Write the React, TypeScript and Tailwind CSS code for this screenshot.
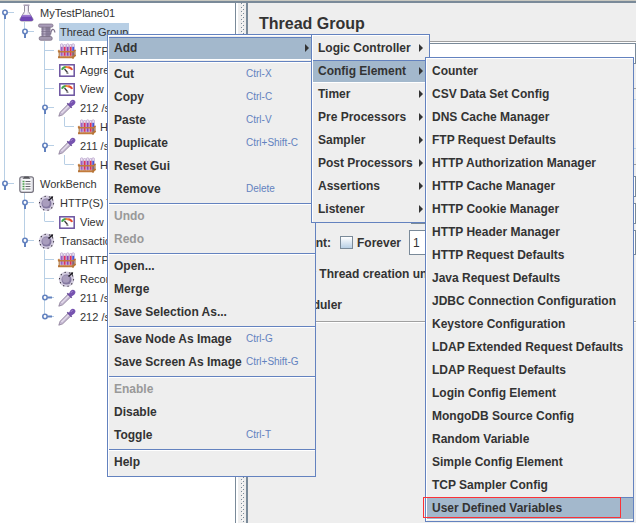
import type { ReactNode } from "react";

type IconName = "flask" | "spool" | "rack" | "gauge" | "dropper" | "clipboard" | "dial";
type Guide = "blank" | "line" | "tee" | "corner" | "open" | "openLast" | "closed" | "closedLast";

interface TreeNode {
  label: string;
  icon: IconName;
  guides: Guide[];
  selected?: boolean;
}

const tree: TreeNode[] = [
  { label: "MyTestPlane01", icon: "flask", guides: ["open"] },
  { label: "Thread Group", icon: "spool", guides: ["line", "openLast"], selected: true },
  { label: "HTTP", icon: "rack", guides: ["line", "blank", "tee"] },
  { label: "Aggre", icon: "gauge", guides: ["line", "blank", "tee"] },
  { label: "View", icon: "gauge", guides: ["line", "blank", "tee"] },
  { label: "212 /s", icon: "dropper", guides: ["line", "blank", "open"] },
  { label: "H", icon: "rack", guides: ["line", "blank", "line", "corner"] },
  { label: "211 /s", icon: "dropper", guides: ["line", "blank", "openLast"] },
  { label: "H", icon: "rack", guides: ["line", "blank", "blank", "corner"] },
  { label: "WorkBench", icon: "clipboard", guides: ["openLast"] },
  { label: "HTTP(S) T", icon: "dial", guides: ["blank", "open"] },
  { label: "View", icon: "gauge", guides: ["blank", "line", "corner"] },
  { label: "Transactio", icon: "dial", guides: ["blank", "openLast"] },
  { label: "HTTP", icon: "rack", guides: ["blank", "blank", "tee"] },
  { label: "Recor", icon: "dial", guides: ["blank", "blank", "tee"] },
  { label: "211 /s", icon: "dropper", guides: ["blank", "blank", "closed"] },
  { label: "212 /s", icon: "dropper", guides: ["blank", "blank", "closedLast"] },
];

function Icon({ name }: { name: IconName }) {
  return (
    <svg viewBox="0 0 18 18" className="-ml-0.5 h-[18px] w-[18px] shrink-0 overflow-visible" aria-hidden="true">
      {name === "flask" && (
        <>
          <path d="M6.500 1.500h4v6L15 15q.5 2-1.600 2H3.600q-2.100 0-1.600-2l4.500-7.500z" fill="#e6e0ee" stroke="#8a8496" strokeWidth=".9" />
          <path d="M4.300 11h8.400l2.200 4.200q.3 1.800-1.500 1.800H3.600q-1.800 0-1.500-1.800z" fill="#6f45b5" />
          <path d="M4.300 11h8.400l.9 1.700H3.400z" fill="#9b78d1" />
          <path d="M8 2v8" stroke="#fff" strokeWidth="1.300" />
          <path d="M5.500 1.200h6" stroke="#aaa1b7" strokeWidth="1.500" />
        </>
      )}
      {name === "spool" && (
        <>
          <path d="M3.500 3.500h9v11h-9z" fill="#8d819d" />
          <path d="M5.500 4h2v10h-2z" fill="#b5abc2" />
          <path d="M3.500 6h9M3.500 8.500h9M3.500 11h9" stroke="#7d718c" strokeWidth=".7" />
          <rect x=".5" y="1" width="14.500" height="3.200" rx="1.500" fill="#a99cb9" stroke="#74697e" strokeWidth=".7" />
          <rect x="1.200" y="13.500" width="13" height="3.800" rx="1.500" fill="#a398b0" stroke="#74697e" strokeWidth=".7" />
          <path d="M12.500 11.500c.5-4 1.500-5.500 3-5 1.300.5.700 2.500 1.800 2.500" fill="none" stroke="#82768f" strokeWidth="1.300" />
        </>
      )}
      {name === "rack" && (
        <>
          {[2.500, 5.500, 8.500, 11.500, 14].map((x, i) => (
            <g key={x}>
              <rect x={x} y={i % 2 ? 2.500 : 1.800} width="2.400" height="12.500" rx="1" fill="#efe6f5" stroke="#9b7fb5" strokeWidth=".5" />
              <rect x={x + 0.300} y="4.800" width="1.800" height="9" fill={["#9b5fc0", "#e0305c", "#8b46b4", "#e8304b", "#4856d8"][i]} />
            </g>
          ))}
          <path d="M0 9.500L1.500 8M0 9.800h15.500l2-2" fill="none" stroke="#c27b3b" strokeWidth="1.400" />
          <path d="M0 15.300h15l2.500-2.300" fill="none" stroke="#c27b3b" strokeWidth="2" />
          <path d="M1.200 9v7M17 8v6M15 10v7" stroke="#ad7036" strokeWidth="1.100" />
        </>
      )}
      {name === "gauge" && (
        <>
          <rect x="1.800" y="3.800" width="14.400" height="11.400" fill="#fff" stroke="#6b529f" strokeWidth="1.500" />
          <path d="M4 8.800q.8-2.800 4-2.800" fill="none" stroke="#3fa548" strokeWidth="2" />
          <path d="M7.500 6q2-.2 3.500.5" fill="none" stroke="#f08a3a" strokeWidth="2" />
          <path d="M10.500 6.300Q13.500 7 14 9" fill="none" stroke="#e64b2f" strokeWidth="2" />
          <path d="M6.500 8l3 3.500" stroke="#363636" strokeWidth="1.200" />
          <path d="M8.500 12.200h2" stroke="#555" />
        </>
      )}
      {name === "dropper" && (
        <>
          <path d="M.8 17.200l1.400-4L10.300 5l2.700 2.700L4.700 15.800z" fill="#c9bdd6" stroke="#867793" strokeWidth=".8" />
          <path d="M3.500 14L11 6.500" stroke="#f6f1fa" />
          <path d="M9.300 4.300l4.400 4.400" stroke="#624595" strokeWidth="1.500" />
          <path d="M10.500 5.500l2-3.500q2.200-2.200 4.200-.5 1.700 2-.5 4.200L12.800 8z" fill="#7753b0" />
          <path d="M12.700 4l2-2" stroke="#a58bd0" />
        </>
      )}
      {name === "clipboard" && (
        <>
          <rect x="1.800" y="1.800" width="13.600" height="15.500" rx="2" fill="#e9e9ee" stroke="#77747f" strokeWidth="1.200" />
          <path d="M4 4h9v12H4z" fill="#f8f8fa" />
          <path d="M4.500 3.800l2-2.300h4l2 2.300z" fill="#55555a" />
          <path d="M7.500 6.500h5M7.500 9h5M7.500 11.500h5M7.500 14h5" stroke="#66666d" strokeWidth="1.100" />
          <path d="M4.500 6.500h2M4.500 9h2M4.500 11.500h2M4.500 14h2" stroke="#489c49" strokeWidth="1.300" />
        </>
      )}
      {name === "dial" && (
        <>
          <circle cx="8.500" cy="9.300" r="7.700" fill="#d3ccdf" />
          <circle cx="8.500" cy="9.300" r="7" fill="none" stroke="#29242f" strokeWidth="1.100" strokeDasharray="1.100 3.300" />
          <circle cx="8.500" cy="9.600" r="5" fill="#8478a0" />
          <circle cx="8" cy="9" r="3.700" fill="#a99dbd" />
          <path d="M10.500 6.500l4-3.500" stroke="#1f1c24" strokeWidth="1.500" />
          <path d="M12 2.800l3.200-.5-.7 3z" fill="#1f1c24" />
        </>
      )}
    </svg>
  );
}

function GuideCell({ kind, root }: { kind: Guide; root: boolean }) {
  const open = kind === "open" || kind === "openLast";
  const closed = kind === "closed" || kind === "closedLast";
  const through = kind === "line" || kind === "tee" || kind === "open" || kind === "closed";
  const top = root && kind === "open" ? 9 : 0;
  return (
    <svg viewBox="0 0 20 19" className="h-[19px] w-5 shrink-0" aria-hidden="true">
      {kind !== "blank" && <path d={`M4.500 ${top}V${through ? 19 : 9}`} stroke="#b8cfe5" />}
      {kind !== "blank" && kind !== "line" && <path d="M4.500 9.500H14" stroke="#b8cfe5" />}
      {open && <path d="M5 12v4" stroke="#6382bf" strokeWidth="2" />}
      {closed && <path d="M8 9.500h4" stroke="#6382bf" strokeWidth="2" />}
      {(open || closed) && <circle cx="5" cy="9.500" r="2.200" fill="#fff" stroke="#6382bf" strokeWidth="1.600" />}
    </svg>
  );
}

function TreeRow({ node }: { node: TreeNode }) {
  return (
    <li role="treeitem" aria-selected={!!node.selected} className="flex h-[19px] items-center">
      {node.guides.map((kind, i) => (
        <GuideCell key={i} kind={kind} root={i === 0} />
      ))}
      <Icon name={node.icon} />
      <span
        className={`ml-[3px] px-px text-[11px] leading-[18px] whitespace-nowrap ${node.selected ? "bg-[#b8cfe5]" : ""}`}
      >
        {node.label}
      </span>
    </li>
  );
}

interface Item {
  label: string;
  keys?: string;
  arrow?: boolean;
  active?: boolean;
  disabled?: boolean;
  marked?: boolean;
}

function MenuRow({ item }: { item: Item }) {
  return (
    <button
      type="button"
      role="menuitem"
      disabled={item.disabled}
      className={`relative flex h-[23px] w-full items-center border-y pr-[6px] pb-[2px] pl-[5px] text-left font-bold whitespace-nowrap ${
        item.active ? "border-t-[#6382bf] border-b-white bg-[#a3b8cc]" : "border-transparent"
      } ${item.disabled ? "text-[#999999]" : "text-[#333333]"}`}
    >
      <span className="flex-1">{item.label}</span>
      {item.keys && <span className="w-[63px] text-[10px] font-normal text-[#6382bf]">{item.keys}</span>}
      {item.arrow && (
        <svg viewBox="0 0 4 8" className="h-2 w-1 shrink-0" aria-hidden="true">
          <path d="M0 0l4 4-4 4z" fill="#333" />
        </svg>
      )}
      {item.marked && (
        <span className="absolute -top-px -left-1 h-[21px] w-[198px] border border-solid border-[#fa3237]" />
      )}
    </button>
  );
}

function Menu({ label, place, children }: { label: string; place: string; children: ReactNode }) {
  return (
    <div role="menu" aria-label={label} className={`absolute border border-[#6382bf] bg-[#eeeeee] ${place}`}>
      <div className="border-t border-l border-white pt-px pb-px">{children}</div>
    </div>
  );
}

const groups: Item[][] = [
  [
    { label: "Cut", keys: "Ctrl-X" },
    { label: "Copy", keys: "Ctrl-C" },
    { label: "Paste", keys: "Ctrl-V" },
    { label: "Duplicate", keys: "Ctrl+Shift-C" },
    { label: "Reset Gui" },
    { label: "Remove", keys: "Delete" },
  ],
  [
    { label: "Undo", disabled: true },
    { label: "Redo", disabled: true },
  ],
  [{ label: "Open..." }, { label: "Merge" }, { label: "Save Selection As..." }],
  [
    { label: "Save Node As Image", keys: "Ctrl-G" },
    { label: "Save Screen As Image", keys: "Ctrl+Shift-G" },
  ],
  [{ label: "Enable", disabled: true }, { label: "Disable" }, { label: "Toggle", keys: "Ctrl-T" }],
  [{ label: "Help" }],
];

const addItems: Item[] = [
  { label: "Logic Controller", arrow: true },
  { label: "Config Element", arrow: true, active: true },
  { label: "Timer", arrow: true },
  { label: "Pre Processors", arrow: true },
  { label: "Sampler", arrow: true },
  { label: "Post Processors", arrow: true },
  { label: "Assertions", arrow: true },
  { label: "Listener", arrow: true },
];

const configItems: Item[] = [
  { label: "Counter" },
  { label: "CSV Data Set Config" },
  { label: "DNS Cache Manager" },
  { label: "FTP Request Defaults" },
  { label: "HTTP Authorization Manager" },
  { label: "HTTP Cache Manager" },
  { label: "HTTP Cookie Manager" },
  { label: "HTTP Header Manager" },
  { label: "HTTP Request Defaults" },
  { label: "Java Request Defaults" },
  { label: "JDBC Connection Configuration" },
  { label: "Keystore Configuration" },
  { label: "LDAP Extended Request Defaults" },
  { label: "LDAP Request Defaults" },
  { label: "Login Config Element" },
  { label: "MongoDB Source Config" },
  { label: "Random Variable" },
  { label: "Simple Config Element" },
  { label: "TCP Sampler Config" },
  { label: "User Defined Variables", active: true, marked: true },
];

const checkbox =
  "h-[13px] w-[13px] shrink-0 appearance-none border border-[#7a8a99] bg-linear-to-b from-white to-[#b8cfe5]";
const field = "block min-w-0 border border-[#7a8a99] bg-white px-[3px] outline-none";

function Splitter() {
  return (
    <div role="separator" aria-orientation="vertical" className="flex w-[10px] shrink-0 border-l-2 border-white bg-[#eeeeee]">
      <svg className="ml-[3px] h-full w-[3px]" aria-hidden="true">
        <defs>
          <pattern id="grip" width="3" height="4" patternUnits="userSpaceOnUse">
            <path d="M0 0h1v1H0zM2 2h1v1H2z" fill="#7a8a99" />
            <path d="M1 1h1v1H1z" fill="#fff" />
          </pattern>
        </defs>
        <rect width="3" height="100%" fill="url(#grip)" />
      </svg>
    </div>
  );
}

function ThreadGroupPanel() {
  return (
    <main className="flex min-w-0 flex-1 flex-col border-l-2 border-[#7a8a99] bg-[#eeeeee] font-bold">
      <h1 className="h-[38px] pl-[11px] text-[16px] leading-[42px]">Thread Group</h1>
      <div className="border-t border-[#a0a0a0]">
        <div className="border-t border-white">
          <input aria-label="Comments" className={`${field} h-[21px] w-full`} />
          <div className="mt-6 border-t border-[#a0a0a0] pt-[10px]">
            <div className="h-[50px] border-y border-[#b8cfe5]" />
          </div>
          <div className="mt-[15px] flex flex-col border-y border-[#a0a0a0] pt-[11px] whitespace-nowrap">
            <input aria-label="Number of Threads" className={`${field} ml-[163px] h-[21px]`} />
            <input aria-label="Ramp-Up Period" className={`${field} mt-[6px] ml-[163px] h-[21px]`} />
            <div className="mt-[6px] flex h-[25px] items-center pl-[11px]">
              <label htmlFor="loops" className="w-[72px] text-right">Loop Count:</label>
              <input id="forever" type="checkbox" className={`${checkbox} ml-[9px]`} />
              <label htmlFor="forever" className="ml-1 w-[52px]">Forever</label>
              <input id="loops" defaultValue="1" className={`${field} h-[25px] flex-1 font-normal`} />
            </div>
            <div className="mt-[7px] flex h-6 items-center gap-1 pl-[19px]">
              <input id="delay" type="checkbox" className={checkbox} />
              <label htmlFor="delay">Delay Thread creation un</label>
            </div>
            <div className="mt-[7px] flex h-6 items-center gap-1 pl-[19px]">
              <input id="scheduler" type="checkbox" className={checkbox} />
              <label htmlFor="scheduler">Scheduler</label>
            </div>
            <div className="h-1" />
          </div>
          <div className="border-t border-white" />
        </div>
      </div>
    </main>
  );
}

export default function App() {
  return (
    <div className="relative flex min-h-screen flex-col overflow-hidden bg-[#eeeeee] font-['Liberation_Sans',Arial,sans-serif] text-[12px] text-[#333333]">
      <div className="h-[3px] border-t border-[#c8c8c0] bg-[#7a8a99]" />
      <div className="flex flex-1">
        <nav className="w-[236px] shrink-0 overflow-hidden border-r border-[#7a8a99] bg-white">
          <ul role="tree" aria-label="Test plan">
            {tree.map((node, i) => (
              <TreeRow key={i} node={node} />
            ))}
          </ul>
        </nav>
        <Splitter />
        <ThreadGroupPanel />
      </div>

      <Menu label="Edit" place="top-[34px] left-[107px] w-[209px]">
        <MenuRow item={{ label: "Add", arrow: true, active: true }} />
        {groups.map((group, i) => (
          <div key={i}>
            <hr className={`h-[2px] border-t border-[#6382bf] bg-white ${i === 0 ? "mt-px" : "mt-[2px]"}`} />
            {group.map((item) => (
              <MenuRow key={item.label} item={item} />
            ))}
          </div>
        ))}
        <div className="h-px" />
      </Menu>
      <Menu label="Add" place="top-[34px] left-[311px] w-[119px]">
        {addItems.map((item) => (
          <MenuRow key={item.label} item={item} />
        ))}
      </Menu>
      <Menu label="Config Element" place="top-[57px] left-[425px] w-[209px]">
        {configItems.map((item) => (
          <MenuRow key={item.label} item={item} />
        ))}
      </Menu>
    </div>
  );
}
